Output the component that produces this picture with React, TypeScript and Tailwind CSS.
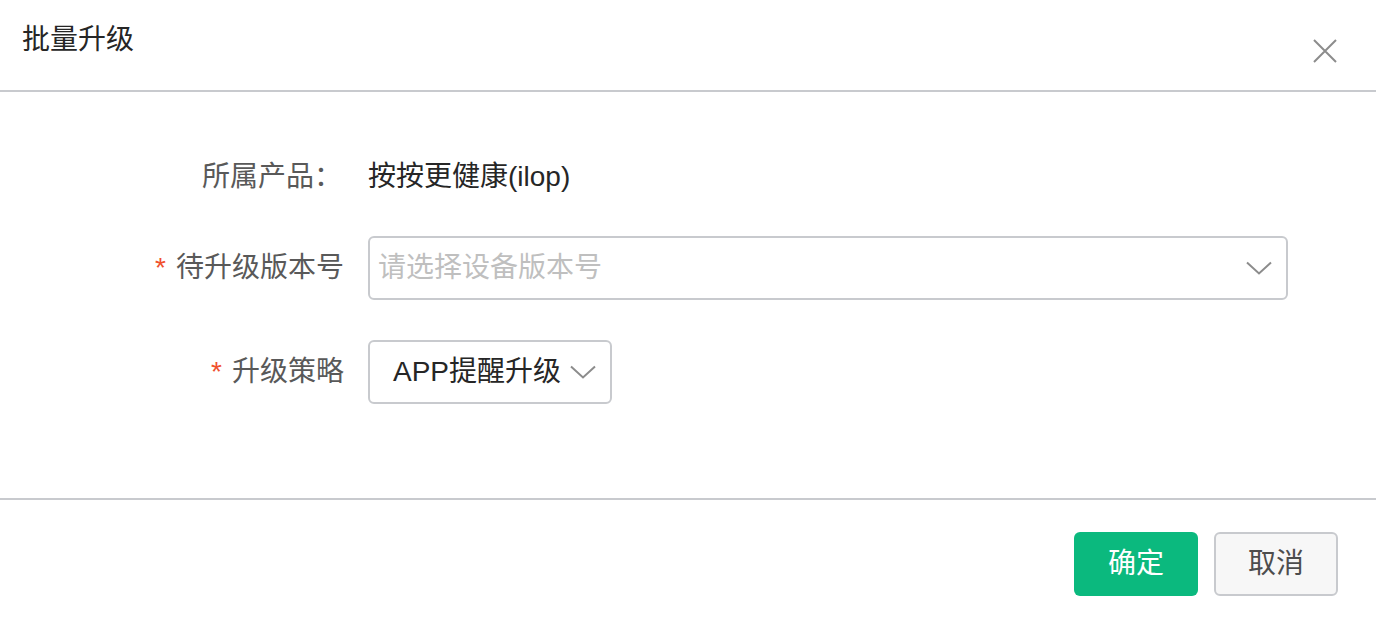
const font = { fontFamily: '"Liberation Sans", "Noto Sans CJK SC", sans-serif' };

function Chevron() {
  return (
    <svg width="26" height="14" viewBox="0 0 26 14" className="shrink-0">
      <path d="M1 1.5 L13 12.5 L25 1.5" fill="none" stroke="#8c8c8c" strokeWidth="2" />
    </svg>
  );
}

export default function App() {
  return (
    <div
      className="flex h-[624px] w-[1376px] flex-col bg-white text-[28px]"
      style={font}
    >
      <div className="flex h-[92px] shrink-0 items-start justify-between border-b-2 border-[#c8cace] pl-[22px] pr-[38px]">
        <h2 className="pt-[20px] text-[28px] leading-[40px] text-[#262626]">
          批量升级
        </h2>
        <button className="mt-[38px] cursor-pointer text-[#8c8c8c]">
          <svg width="26" height="26" viewBox="0 0 26 26">
            <path d="M2 2 L24 24 M24 2 L2 24" stroke="#8c8c8c" strokeWidth="2" />
          </svg>
        </button>
      </div>

      <div className="flex h-[408px] shrink-0 flex-col border-b-2 border-[#c8cace] pt-[53px]">
        <div className="flex h-[64px] items-center">
          <div className="w-[342px] text-right leading-[40px] text-[#595959]">所属产品：</div>
          <div className="ml-[26px] leading-[40px] text-[#262626]">按按更健康(ilop)</div>
        </div>

        <div className="mt-[27px] flex h-[64px] items-center">
          <div className="w-[344px] text-right leading-[40px] text-[#595959]">
            <span className="mr-[10px] text-[#f0502d]">*</span>待升级版本号
          </div>
          <div className="ml-[24px] flex h-[64px] w-[920px] items-center justify-between rounded-[6px] border-2 border-[#c8cace] pl-[8px] pr-[14px]">
            <span className="text-[#bfbfbf]">请选择设备版本号</span>
            <Chevron />
          </div>
        </div>

        <div className="mt-[40px] flex h-[64px] items-center">
          <div className="w-[344px] text-right leading-[40px] text-[#595959]">
            <span className="mr-[10px] text-[#f0502d]">*</span>升级策略
          </div>
          <div className="ml-[24px] flex h-[64px] w-[244px] items-center justify-between rounded-[6px] border-2 border-[#c8cace] pl-[23px] pr-[14px]">
            <span className="text-[#262626]">APP提醒升级</span>
            <Chevron />
          </div>
        </div>
      </div>

      <div className="flex justify-end gap-[16px] pr-[38px] pt-[32px]">
        <button className="h-[64px] w-[124px] cursor-pointer rounded-[6px] bg-[#0bb97e] text-white">
          确定
        </button>
        <button className="h-[64px] w-[124px] cursor-pointer rounded-[6px] border-2 border-[#c8cace] bg-[#f7f7f7] text-[#4d4d4d]">
          取消
        </button>
      </div>
    </div>
  );
}
